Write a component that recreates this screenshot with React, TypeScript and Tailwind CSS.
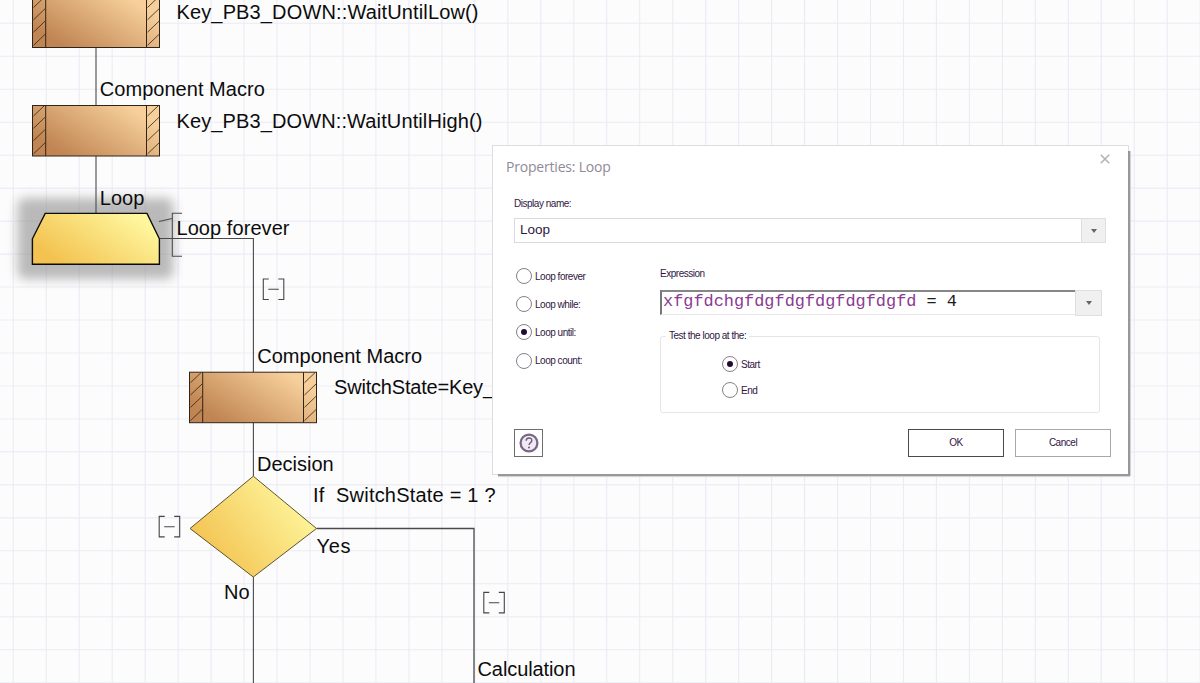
import type { ReactNode } from "react";

const GRID_STEP = 32.97;

interface LabelProps {
  x: number;
  y: number;
  width?: number;
  children: ReactNode;
}

function Label({ x, y, width, children }: LabelProps) {
  return (
    <text x={x} y={y} textLength={width} className="whitespace-pre fill-[#0c0c0c]">
      {children}
    </text>
  );
}

function Grid() {
  const columns = Array.from({ length: 37 }, (_, i) => 13.3 + i * GRID_STEP);
  const rows = Array.from({ length: 21 }, (_, i) => 23.3 + i * GRID_STEP);

  return (
    <g stroke="#ebebf5" strokeWidth="1.1">
      {columns.map((x) => (
        <line key={x} x1={x} x2={x} y1="0" y2="683" />
      ))}
      {rows.map((y) => (
        <line key={y} x1="0" x2="1200" y1={y} y2={y} />
      ))}
    </g>
  );
}

function MacroBlock({ x, y }: { x: number; y: number }) {
  const hatches = [10.5, 22.8, 35.2, 48.4];

  return (
    <g transform={`translate(${x} ${y})`} stroke="#2f2419" strokeWidth="1">
      <rect width="127" height="50.5" fill="url(#copper)" />
      {[0, 114].map((left) => (
        <g key={left}>
          {hatches.map((h) => (
            <path key={h} d={h < 12 ? `M${left + 1} ${h}L${left + 11.5} 0.5` : `M${left + 1} ${h}l11.5 -11`} strokeWidth="0.8" />
          ))}
        </g>
      ))}
      <path d="M13.2 0V50.5M114 0V50.5" />
    </g>
  );
}

function CollapseMark({ x, y }: { x: number; y: number }) {
  return (
    <path
      transform={`translate(${x} ${y})`}
      d="M5.5 0H0V20.5H5.5M15 0H20.5V20.5H15M5 10.3H15.5"
      fill="none"
      stroke="#454545"
      strokeWidth="1.1"
    />
  );
}

function Flowchart() {
  return (
    <svg
      viewBox="0 0 1200 683"
      className="block h-full w-full font-['Liberation_Sans',Arial,sans-serif] text-[20px]"
    >
      <defs>
        <linearGradient id="copper" x1="0.1" y1="0.75" x2="0.9" y2="0.25">
          <stop offset="0" stopColor="#c08552" />
          <stop offset="1" stopColor="#f6cf9a" />
        </linearGradient>
        <linearGradient id="gold" x1="0.08" y1="0.75" x2="0.92" y2="0.25">
          <stop offset="0" stopColor="#f3c250" />
          <stop offset="1" stopColor="#fef69d" />
        </linearGradient>
        <filter id="glow" x="-20%" y="-30%" width="140%" height="160%">
          <feGaussianBlur stdDeviation="5.5" />
        </filter>
      </defs>

      <Grid />

      <rect x="17.5" y="198" width="156" height="81" rx="7" fill="#8a8a8a" opacity="0.58" filter="url(#glow)" />

      <g fill="none" stroke="#4a4a4c" strokeWidth="1.1">
        <path d="M96 47.5V105.5M96 155.5V213" />
        <path d="M159.5 238.5H253.4V372M253.4 422.5V476" />
        <path d="M316.5 528.5H474V683" strokeWidth="1.3" />
        <path d="M253.4 577V683" />
        <path d="M182 213.3H172.3V256.3H182M159 221.5L172 218.5" />
      </g>

      <MacroBlock x={32.5} y={-3} />
      <MacroBlock x={32.5} y={105.5} />
      <MacroBlock x={189.5} y={372.2} />

      <path
        d="M45.2 213.4H147L159.4 238.8V264.3H32.4V238.8Z"
        fill="url(#gold)"
        stroke="#0c0c0c"
        strokeWidth="1.4"
      />
      <path d="M253.3 476.2L316.5 528.5L253.3 577L190 528.5Z" fill="url(#gold)" stroke="#5d532f" />

      <CollapseMark x={263.3} y={279} />
      <CollapseMark x={159.2} y={516.4} />
      <CollapseMark x={483.8} y={592.4} />

      <Label x={176.5} y={19.3} width={302}>Key_PB3_DOWN::WaitUntilLow()</Label>
      <Label x={99.8} y={96.2} width={165}>Component Macro</Label>
      <Label x={176.5} y={127.5} width={306}>Key_PB3_DOWN::WaitUntilHigh()</Label>
      <Label x={99.8} y={204.7}>Loop</Label>
      <Label x={176.5} y={235} width={113}>Loop forever</Label>
      <Label x={257.2} y={363.3} width={165}>Component Macro</Label>
      <Label x={334} y={393.8} width={160}>SwitchState=Key_</Label>
      <Label x={257} y={470.5}>Decision</Label>
      <Label x={313} y={502} width={182.5}>{"If  SwitchState = 1 ?"}</Label>
      <Label x={316.5} y={552.5} width={34}>Yes</Label>
      <Label x={224} y={598.9}>No</Label>
      <Label x={477.5} y={676} width={98}>Calculation</Label>
    </svg>
  );
}

function Radio({ label, checked = false }: { label: string; checked?: boolean }) {
  return (
    <div className="flex h-4 items-center gap-[3px]">
      <span className="flex size-4 items-center justify-center rounded-full border border-[#85808a] bg-white">
        {checked && <span className="size-[6px] rounded-full bg-[#220a35]" />}
      </span>
      <span className="pt-px">{label}</span>
    </div>
  );
}

function DropButton({ className }: { className: string }) {
  return (
    <div className={`flex items-center justify-center border border-[#dfdee0] bg-[#f0f0f0] ${className}`}>
      <svg viewBox="0 0 6 4" className="h-1 w-1.5">
        <path d="M0 0H6L3 4Z" fill="#68646c" />
      </svg>
    </div>
  );
}

function LoopDialog() {
  return (
    <div className="absolute left-[492px] top-[145px] h-[330px] w-[637px] border border-[#dedee2] bg-white font-['Liberation_Sans',Arial,sans-serif] text-[10px] leading-4 tracking-[-0.48px] text-[#30173f]">
      {/* hard drop shadow along the right and bottom edges */}
      <div className="absolute -right-[2px] -bottom-[2px] top-[5px] w-[2px] bg-[#98989a] shadow-[1px_0_1px_#d0d0d3]" />
      <div className="absolute -right-[2px] -bottom-[2px] left-[5px] h-[2px] bg-[#98989a] shadow-[0_1px_1px_#d0d0d3]" />

      <div className="flex h-[50px] items-start justify-between pl-[13px] pr-[18px] pt-[8px]">
        <h1 className="pt-[3px] font-['Open_Sans','Noto_Sans',sans-serif] text-[14px] leading-5 tracking-[-0.2px] text-[#918997]">
          Properties: Loop
        </h1>
        <svg viewBox="0 0 10 10" className="size-[10px]">
          <path d="M0.8 0.8L9.2 9.2M9.2 0.8L0.8 9.2" stroke="#b5b2b7" strokeWidth="1.6" />
        </svg>
      </div>

      <div className="pl-[21px]">
        <label className="block h-[22px]">Display name:</label>
        <div className="flex h-[25px] w-[592px]">
          <div className="flex-1 border border-r-0 border-[#dcdadd] pl-[5px] text-[13.5px] leading-[21px] tracking-normal">
            Loop
          </div>
          <DropButton className="w-[25px]" />
        </div>
      </div>

      <div className="flex pl-[23px] pt-[22px]">
        <div className="flex w-[144px] flex-col gap-[12.2px] pt-[3px]">
          <Radio label="Loop forever" />
          <Radio label="Loop while:" />
          <Radio label="Loop until:" checked />
          <Radio label="Loop count:" />
        </div>

        <div className="w-[442px]">
          <div className="h-[25px] pt-px">Expression</div>
          <div className="flex h-[26px] items-start">
            <div className="h-[25px] flex-1 whitespace-pre border-b border-l-2 border-t-2 border-b-[#e8e8ea] border-l-[#77777b] border-t-[#87878a] pl-px font-['Liberation_Mono','Courier_New',monospace] text-[16.9px] leading-[19px] tracking-normal text-[#1d1d1d]">
              <span className="text-[#8a3b92]">xfgfdchgfdgfdgfdgfdgfdgfd</span> = 4
            </div>
            <DropButton className="h-[26px] w-[27px]" />
          </div>
          <fieldset className="mt-[12px] h-[85px] w-[440px] rounded-[3px] border border-[#e7e5e8] px-[5px]">
            <legend className="px-[3px]">Test the loop at the:</legend>
            <div className="flex flex-col gap-[10.3px] pl-[56px] pt-[12px]">
              <Radio label="Start" checked />
              <Radio label="End" />
            </div>
          </fieldset>
        </div>
      </div>

      <div className="flex items-center pl-[21px] pt-[16px]">
        <button className="flex h-[28px] w-[29px] items-center justify-center border border-[#6e6e72]">
          <svg viewBox="0 0 20 20" className="size-5" fill="none">
            <circle cx="10" cy="10" r="8.4" fill="#f1e9f5" stroke="#7a6885" strokeWidth="2.3" />
            <path d="M7.2 7.7C7.2 4 12.8 4.1 12.8 7.5C12.8 9.7 10 9.7 10 12.1" stroke="#6c5a78" strokeWidth="1.4" />
            <circle cx="10" cy="14.4" r="1" fill="#6c5a78" />
          </svg>
        </button>
        <button className="ml-[365px] h-[28px] w-[96px] border border-[#4c4750]">OK</button>
        <button className="ml-[11px] h-[28px] w-[96px] border border-[#aaa7ac]">Cancel</button>
      </div>
    </div>
  );
}

export default function App() {
  return (
    <main className="relative h-[683px] w-[1200px] overflow-hidden bg-[#fcfcfd]">
      <Flowchart />
      <LoopDialog />
    </main>
  );
}
